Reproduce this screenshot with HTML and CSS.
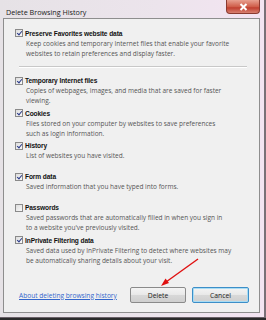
FILE: index.html
```html
<!DOCTYPE html>
<html>
<head>
<meta charset="utf-8">
<link rel="stylesheet" href="styles.css">
</head>
<body>
<div class="window">
  <div class="titlebar">
    <span class="title">Delete Browsing History</span>
    <div class="close"><svg width="9" height="8" viewBox="0 0 9 8"><path d="M1.5 1 L7.5 7 M7.5 1 L1.5 7" stroke="#fff" stroke-width="2"/></svg></div>
  </div>
  <div class="client">
    <div class="option">
      <span class="cb checked"></span>
      <div class="txt">
        <div class="label">Preserve Favorites website data</div>
        <div class="desc">Keep cookies and temporary Internet files that enable your favorite<br>websites to retain preferences and display faster.</div>
      </div>
    </div>
    <div class="sep"></div>
    <div class="option">
      <span class="cb checked"></span>
      <div class="txt">
        <div class="label">Temporary Internet files</div>
        <div class="desc">Copies of webpages, images, and media that are saved for faster<br>viewing.</div>
      </div>
    </div>
    <div class="option">
      <span class="cb checked"></span>
      <div class="txt">
        <div class="label">Cookies</div>
        <div class="desc">Files stored on your computer by websites to save preferences<br>such as login information.</div>
      </div>
    </div>
    <div class="option">
      <span class="cb checked"></span>
      <div class="txt">
        <div class="label">History</div>
        <div class="desc">List of websites you have visited.</div>
      </div>
    </div>
    <div class="option gap">
      <span class="cb checked"></span>
      <div class="txt">
        <div class="label">Form data</div>
        <div class="desc">Saved information that you have typed into forms.</div>
      </div>
    </div>
    <div class="option gap">
      <span class="cb"></span>
      <div class="txt">
        <div class="label">Passwords</div>
        <div class="desc">Saved passwords that are automatically filled in when you sign in<br>to a website you've previously visited.</div>
      </div>
    </div>
    <div class="option">
      <span class="cb checked"></span>
      <div class="txt">
        <div class="label">InPrivate Filtering data</div>
        <div class="desc">Saved data used by InPrivate Filtering to detect where websites may<br>be automatically sharing details about your visit.</div>
      </div>
    </div>
    <div class="footer">
      <a class="link" href="#">About deleting browsing history</a>
      <div class="buttons">
        <button class="btn">Delete</button>
        <button class="btn default">Cancel</button>
      </div>
    </div>
  </div>
  <svg class="arrow" width="266" height="320" viewBox="0 0 266 320">
    <path d="M198 259 L166 282" stroke="#e01010" stroke-width="1.4" fill="none"/>
    <path d="M161 286 L165.5 278.5 L169 283 Z" fill="#e01010"/>
  </svg>
</div>
</body>
</html>
```

FILE: styles.css
```css
html, body {
  margin: 0;
  padding: 0;
}
body {
  width: 266px;
  height: 320px;
  overflow: hidden;
  background: #2a2a2a;
  font-family: "Open Sans", "Noto Sans", sans-serif;
}
.window {
  position: relative;
  width: 266px;
  height: 318px;
  box-sizing: border-box;
  background: linear-gradient(90deg, #e6e2e6 0%, #ece4ec 60%, #f4e4f2 100%);
  border-right: 2px solid #7a7078;
  border-bottom: 1px solid #6a6068;
  display: flex;
  flex-direction: column;
}
.titlebar {
  height: 18px;
  flex: none;
  display: flex;
  align-items: flex-start;
  position: relative;
}
.title {
  font-family: "Open Sans", sans-serif;
  font-size: 7.2px;
  color: #1a1a1a;
  margin: 7px 0 0 6px;
}
.close {
  position: absolute;
  left: 226px;
  top: 0;
  width: 34px;
  height: 14px;
  box-sizing: border-box;
  border: 1px solid #8a3a30;
  border-top: none;
  border-radius: 0 0 4px 4px;
  background: linear-gradient(180deg, #e8a090 0%, #d0604c 50%, #c04030 60%, #d88070 100%);
  display: flex;
  align-items: center;
  justify-content: center;
}
.client {
  margin: 0 4px 4px 3px;
  flex: 1;
  background: #f0f0f0;
  border: 1px solid #8e8e8e;
  padding: 8.5px 10px 0 11px;
  display: flex;
  flex-direction: column;
}
.option {
  display: flex;
  align-items: flex-start;
  margin-bottom: 1.5px;
}
.option.gap {
  margin-top: 8.5px;
}
.cb {
  width: 8px;
  height: 8px;
  box-sizing: border-box;
  border: 1px solid #8a8a8a;
  background: linear-gradient(135deg, #dcdcdc, #fafafa);
  margin-top: 1.5px;
  margin-right: 2px;
  flex: none;
  position: relative;
}
.cb.checked::after {
  content: "";
  position: absolute;
  left: 2px;
  top: 0px;
  width: 2px;
  height: 4px;
  border: solid #2a3a8a;
  border-width: 0 1.3px 1.3px 0;
  transform: rotate(40deg);
}
.txt {
  flex: 1;
}
.label {
  font-family: "Liberation Sans", Arial, sans-serif;
  font-weight: bold;
  font-size: 6.6px;
  letter-spacing: -0.1px;
  line-height: 11px;
  color: #111;
}
.desc {
  font-size: 6.5px;
  line-height: 10px;
  color: #555;
  padding-left: 1px;
  white-space: nowrap;
}
.sep {
  height: 1px;
  background: #c8c8c8;
  border-bottom: 1px solid #fff;
  margin: 6px 2px 7px 4px;
}
.footer {
  margin-top: auto;
  margin-bottom: 9px;
  display: flex;
  align-items: center;
}
.link {
  font-size: 6.6px;
  color: #3366cc;
  text-decoration: underline;
  margin-left: 4px;
}
.buttons {
  margin-left: auto;
  display: flex;
  gap: 6px;
}
.btn {
  font-family: "Open Sans", sans-serif;
  font-size: 6.8px;
  color: #222;
  height: 16px;
  width: 56px;
  padding: 0;
  border: 1px solid #8a8a8a;
  border-radius: 2px;
  background: linear-gradient(180deg, #f4f4f4 0%, #e8e8e8 50%, #d8d8d8 51%, #cfcfcf 100%);
}
.btn.default {
  width: 57px;
  border-color: #3c8ec8;
  box-shadow: inset 0 0 0 1px #a8dcf4;
}
.arrow {
  position: absolute;
  left: 0;
  top: 0;
  pointer-events: none;
}
```
